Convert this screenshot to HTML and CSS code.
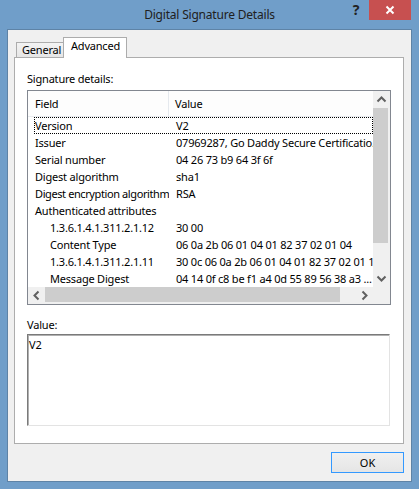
FILE: index.html
```html
<!DOCTYPE html>
<html>
<head>
<meta charset="utf-8">
<link rel="stylesheet" href="styles.css">
</head>
<body>
<div class="window">
  <div class="titlebar">
    <div class="title">Digital Signature Details</div>
    <div class="controls">
      <div class="help">?</div>
      <div class="close">
        <svg width="10" height="10" viewBox="0 0 10 10"><path d="M1.5 1.5 L8.5 8.5 M8.5 1.5 L1.5 8.5" stroke="#fff" stroke-width="2" fill="none"/></svg>
      </div>
    </div>
  </div>
  <div class="client">
    <div class="tabs">
      <div class="tab general">General</div>
      <div class="tab active">Advanced</div>
    </div>
    <div class="panel">
      <div class="label">Signature details:</div>
      <div class="list">
        <div class="list-content">
          <div class="header"><div class="c1">Field</div><div class="c2">Value</div></div>
          <div class="row focus"><div class="c1">Version</div><div class="c2">V2</div></div>
          <div class="row"><div class="c1">Issuer</div><div class="c2">07969287, Go Daddy Secure Certificatio...</div></div>
          <div class="row"><div class="c1">Serial number</div><div class="c2">04 26 73 b9 64 3f 6f</div></div>
          <div class="row"><div class="c1">Digest algorithm</div><div class="c2">sha1</div></div>
          <div class="row"><div class="c1 long">Digest encryption algorithm</div><div class="c2">RSA</div></div>
          <div class="row"><div class="c1">Authenticated attributes</div><div class="c2"></div></div>
          <div class="row sub"><div class="c1">1.3.6.1.4.1.311.2.1.12</div><div class="c2">30 00</div></div>
          <div class="row sub"><div class="c1">Content Type</div><div class="c2">06 0a 2b 06 01 04 01 82 37 02 01 04</div></div>
          <div class="row sub"><div class="c1">1.3.6.1.4.1.311.2.1.11</div><div class="c2">30 0c 06 0a 2b 06 01 04 01 82 37 02 01 15</div></div>
          <div class="row sub"><div class="c1">Message Digest</div><div class="c2">04 14 0f c8 be f1 a4 0d 55 89 56 38 a3 ...</div></div>
        </div>
        <div class="vscroll">
          <div class="sb-btn"><svg width="17" height="17" viewBox="0 0 17 17"><path d="M4.5 10.5 L8.5 6.5 L12.5 10.5" stroke="#606060" stroke-width="2" fill="none"/></svg></div>
          <div class="vthumb"></div>
          <div class="vtrack"></div>
          <div class="sb-btn"><svg width="17" height="17" viewBox="0 0 17 17"><path d="M4.5 6.5 L8.5 10.5 L12.5 6.5" stroke="#606060" stroke-width="2" fill="none"/></svg></div>
        </div>
        <div class="hscroll">
          <div class="sb-btn"><svg width="17" height="17" viewBox="0 0 17 17"><path d="M10.5 4.5 L6.5 8.5 L10.5 12.5" stroke="#606060" stroke-width="2" fill="none"/></svg></div>
          <div class="hthumb"></div>
          <div class="htrack"></div>
          <div class="sb-btn"><svg width="17" height="17" viewBox="0 0 17 17"><path d="M6.5 4.5 L10.5 8.5 L6.5 12.5" stroke="#606060" stroke-width="2" fill="none"/></svg></div>
        </div>
        <div class="corner"></div>
      </div>
      <div class="label value-label">Value:</div>
      <div class="textbox">V2</div>
    </div>
    <div class="footer">
      <button class="ok">OK</button>
    </div>
  </div>
</div>
</body>
</html>
```
FILE: styles.css
```css
* { box-sizing: border-box; }
body {
  margin: 0;
  font-family: "Noto Sans", "Liberation Sans", sans-serif;
  font-size: 11px;
  letter-spacing: -0.2px;
  color: #000;
}
.window {
  width: 419px;
  height: 489px;
  background: #709ec9;
  padding: 0 8px 8px;
  display: flex;
  flex-direction: column;
}
.titlebar {
  height: 30px;
  display: grid;
  flex: none;
}
.title, .controls { grid-area: 1 / 1; }
.title {
  text-align: center;
  font-size: 12px;
  letter-spacing: -0.2px;
  line-height: 30px;
  color: #202020;
}
.controls {
  justify-self: end;
  display: flex;
  align-items: flex-start;
}
.help {
  width: 26px;
  height: 20px;
  text-align: center;
  font-weight: bold;
  font-size: 14px;
  line-height: 20px;
  color: #222;
}
.close {
  width: 42px;
  height: 20px;
  background: #c75050;
  display: flex;
  align-items: center;
  justify-content: center;
}
.client {
  flex: 1;
  background: #f0f0f0;
  display: flex;
  flex-direction: column;
  padding: 0 7px 8px 6px;
  box-shadow: 0 0 0 1px rgba(60, 80, 100, 0.35);
}
.tabs {
  display: flex;
  align-items: flex-end;
  margin-top: 7px;
  padding-left: 2px;
  height: 21px;
  margin-bottom: -1px;
  position: relative;
  z-index: 1;
}
.tab {
  border: 1px solid #acacac;
  border-bottom: none;
  white-space: nowrap;
}
.tab.general {
  width: 48px;
  height: 15px;
  margin-bottom: 1px;
  padding-left: 5px;
  line-height: 14px;
  background: linear-gradient(#f3f3f3, #e6e6e6);
}
.tab.active {
  width: 64px;
  height: 21px;
  margin-left: -1px;
  padding-left: 7px;
  line-height: 16px;
  background: #fff;
}
.panel {
  height: 387px;
  border: 1px solid #adadad;
  background: #fff;
  padding: 13px 12px 0;
  flex: none;
}
.label {
  line-height: 16px;
  height: 16px;
}
.list {
  margin-top: 3px;
  height: 215px;
  border: 1px solid #828790;
  display: grid;
  grid-template-columns: 1fr 17px;
  grid-template-rows: 196px 17px;
}
.list-content {
  overflow: hidden;
  white-space: nowrap;
}
.header {
  display: flex;
  height: 26px;
  line-height: 25px;
  border-bottom: 1px solid #e8ebef;
  background: #fdfdfd;
}
.header .c1 {
  width: 141px;
  padding-left: 7px;
  border-right: 1px solid #e5e9ee;
}
.header .c2 { padding-left: 6px; }
.row {
  display: flex;
  height: 17px;
  line-height: 17px;
}
.row .c1 {
  width: 141px;
  flex: none;
  padding-left: 7px;
  overflow: hidden;
}
.row .c1.long { letter-spacing: -0.4px; }
.row .c2 { padding-left: 7px; }
.row.sub .c1 { padding-left: 22px; }
.row.focus {
  outline: 1px dotted #000;
  outline-offset: -1px;
  margin-left: 6px;
}
.row.focus .c1 {
  width: 135px;
  padding-left: 1px;
}
.vscroll {
  display: flex;
  flex-direction: column;
  background: #f0f0f0;
}
.sb-btn {
  width: 17px;
  height: 17px;
  flex: none;
  display: flex;
  align-items: center;
  justify-content: center;
}
.vthumb {
  height: 135px;
  background: #cdcdcd;
  margin: 0 2px 0 0;
  flex: none;
}
.vtrack { flex: 1; }
.hscroll {
  display: flex;
  background: #f0f0f0;
}
.hthumb {
  width: 295px;
  background: #cdcdcd;
  margin: 0 0 2px;
  flex: none;
}
.htrack { flex: 1; }
.corner { background: #f0f0f0; }
.value-label { margin-top: 12px; }
.textbox {
  margin-top: 1px;
  margin-right: 1px;
  height: 92px;
  border: 1px solid;
  border-color: #7a7a7a #e3e3e3 #e3e3e3 #7a7a7a;
  box-shadow: inset 1px 1px 0 #b0b0b0;
  padding: 2px 1px;
  line-height: 16px;
}
.footer {
  display: flex;
  justify-content: flex-end;
  margin-top: 8px;
}
.ok {
  width: 73px;
  height: 21px;
  border: 1px solid #3399ff;
  background: linear-gradient(#f0f0f0, #e5e5e5);
  font-family: "Noto Sans", "Liberation Sans", sans-serif;
  font-size: 11px;
  color: #000;
  padding: 0;
  line-height: 19px;
}
```
